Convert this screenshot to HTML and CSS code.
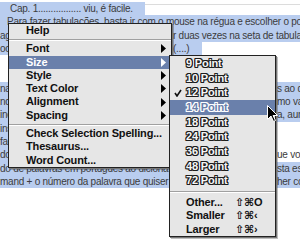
FILE: index.html
```html
<!DOCTYPE html>
<html lang="pt">

<head>
    <meta charset="UTF-8">
    <title>Size menu</title>
    <link rel="stylesheet" href="styles.css">
</head>

<body>
    <!-- documento por trás do menu -->
    <div class="doc">
        <div class="line">
            <span class="sel sel-cap">Cap. 1................. viu, é facile.</span>
            <span class="rule"></span>
        </div>
        <div class="line sel lead">Para fazer tabulações, basta ir com o mouse na régua e escolher o ponto</div>
        <div class="line sel">
            <span class="col-a">agora</span>
            <span class="col-rest">r duas vezes na seta de tabulação</span>
        </div>
        <div class="line">
            <span class="sel sel-etc"><span class="col-a">ocorre</span><span class="col-rest">(....)</span></span>
        </div>
        <div class="line"></div>
        <div class="line"></div>
        <div class="line sel">
            <span class="col-a">nas</span>
            <span class="col-b"></span>
            <span class="col-rest">s ao d</span>
        </div>
        <div class="line sel">
            <span class="col-a">nd</span>
            <span class="col-b"></span>
            <span class="col-rest">mo va</span>
        </div>
        <div class="line sel">
            <span class="col-a">inclui</span>
            <span class="col-b"></span>
            <span class="col-rest">a, aum</span>
        </div>
        <div class="line">
            <span class="sel col-a">inserir</span>
        </div>
        <div class="line">
            <span class="sel col-a">faça</span>
        </div>
        <div class="line">
            <span class="sel col-a">do</span>
            <span class="col-b"></span>
            <span class="col-rest">ue vo</span>
        </div>
        <div class="line sel">
            <span class="col-a">do de palavras em português ao dicionário</span>
            <span class="col-b"></span>
            <span class="col-rest">sta es</span>
        </div>
        <div class="line sel">
            <span class="col-a">mand + o número da palavra que quiser escolher</span>
            <span class="col-b"></span>
            <span class="col-rest">her co</span>
        </div>
    </div>

    <!-- menu de contexto -->
    <div class="menu main-menu">
        <div class="item">Help</div>
        <div class="sep"></div>
        <div class="item">Font<svg class="arrow" width="5" height="9"><polygon points="0,0 5,4.5 0,9" /></svg></div>
        <div class="item active">Size<svg class="arrow" width="5" height="9"><polygon points="0,0 5,4.5 0,9" /></svg></div>
        <div class="item">Style<svg class="arrow" width="5" height="9"><polygon points="0,0 5,4.5 0,9" /></svg></div>
        <div class="item">Text Color<svg class="arrow" width="5" height="9"><polygon points="0,0 5,4.5 0,9" /></svg></div>
        <div class="item">Alignment<svg class="arrow" width="5" height="9"><polygon points="0,0 5,4.5 0,9" /></svg></div>
        <div class="item">Spacing<svg class="arrow" width="5" height="9"><polygon points="0,0 5,4.5 0,9" /></svg></div>
        <div class="sep"></div>
        <div class="item">Check Selection Spelling...</div>
        <div class="item">Thesaurus...</div>
        <div class="item">Word Count...</div>
    </div>

    <div class="menu size-menu">
        <div class="item pt">9 Point</div>
        <div class="item pt">10 Point</div>
        <div class="item pt"><svg class="check" width="8" height="8"><path d="M1 4 L3 7 L7 1" /></svg>12 Point</div>
        <div class="item pt active">14 Point</div>
        <div class="item pt">18 Point</div>
        <div class="item pt">24 Point</div>
        <div class="item pt">36 Point</div>
        <div class="item pt">48 Point</div>
        <div class="item pt">72 Point</div>
        <div class="sep"></div>
        <div class="item"><span class="label">Other...</span><span class="key">⇧⌘O</span></div>
        <div class="item"><span class="label">Smaller</span><span class="key">⇧⌘‹</span></div>
        <div class="item"><span class="label">Larger</span><span class="key">⇧⌘›</span></div>
    </div>

    <svg class="cursor" width="12" height="18">
        <path d="M0.5 0.5 L0.5 14.5 L4 11 L6.5 16.5 L8.5 15.5 L6 10.5 L10.5 10.5 Z" />
    </svg>
</body>

</html>
```

FILE: styles.css
```css
body {
    margin: 0;
    width: 300px;
    height: 240px;
    overflow: hidden;
    position: relative;
    background-color: #fff;
    font-family: "Liberation Sans", Arial, sans-serif;
}

.doc {
    padding-top: 2px;
    font-size: 10px;
    letter-spacing: -0.25px;
    color: #3c3c3c;
}

.line {
    display: flex;
    height: 13.3px;
    line-height: 13.3px;
    white-space: nowrap;
    overflow: hidden;
}

.sel {
    background-color: #b9cdef;
}

.sel-cap {
    width: 135px;
    padding-left: 10px;
    flex: none;
}

.rule {
    flex: 1;
    height: 1px;
    margin-top: 2px;
    background-color: #dcdcdc;
}

.lead {
    padding-left: 7px;
}

.sel-etc {
    display: flex;
    width: 202px;
}

.col-a {
    width: 173px;
    flex: none;
    overflow: hidden;
}

.col-b {
    width: 104px;
    flex: none;
}

.col-rest {
    flex: 1;
    overflow: hidden;
}

/* menus */
.menu {
    position: absolute;
    background-color: #e6e6e6;
    border: 1px solid #222;
    box-shadow: 1px 1px 0 #777, 2px 2px 0 rgba(0, 0, 0, 0.25);
    font-size: 11px;
    font-weight: bold;
    letter-spacing: -0.15px;
    color: #111;
}

.main-menu {
    left: 8px;
    top: 23px;
    width: 162px;
}

.size-menu {
    left: 169px;
    top: 55px;
    width: 105px;
}

.item {
    display: flex;
    align-items: center;
    justify-content: space-between;
    height: 13.3px;
    line-height: 13.3px;
    padding: 0 5px 0 17px;
    white-space: nowrap;
}

.item.active {
    background-color: #6a80ab;
    color: #fff;
}

.arrow polygon {
    fill: #000;
}

.active .arrow polygon {
    fill: #fff;
}

.sep {
    height: 1px;
    margin: 1.5px 0;
    background-color: #a0a0a0;
    border-bottom: 1px solid #fff;
}

.size-menu .item {
    padding: 0 12px 0 16px;
    position: relative;
}

.size-menu .pt {
    height: 14.66px;
    line-height: 14.66px;
    justify-content: flex-start;
    color: #f6f6f6;
    text-shadow: -1px 0 #1c1c1c, 1px 0 #1c1c1c, 0 -1px #1c1c1c, 0 1px #1c1c1c,
        -1px -1px #1c1c1c, 1px 1px #1c1c1c, -1px 1px #1c1c1c, 1px -1px #1c1c1c;
}

.size-menu .pt.active {
    color: #6a80ab;
    text-shadow: -1px 0 #fff, 1px 0 #fff, 0 -1px #fff, 0 1px #fff,
        -1px -1px #fff, 1px 1px #fff, -1px 1px #fff, 1px -1px #fff;
}

.size-menu .sep {
    margin: 3px 0;
}

.check {
    position: absolute;
    left: 4px;
    top: 4px;
}

.check path {
    fill: none;
    stroke: #111;
    stroke-width: 1.6;
}

.label {
    flex: 1;
}

.key {
    width: 28px;
    font-family: "Liberation Sans", "DejaVu Sans", sans-serif;
}

.cursor {
    position: absolute;
    left: 267px;
    top: 105px;
}

.cursor path {
    fill: #000;
    stroke: #fff;
    stroke-width: 1;
}
```
